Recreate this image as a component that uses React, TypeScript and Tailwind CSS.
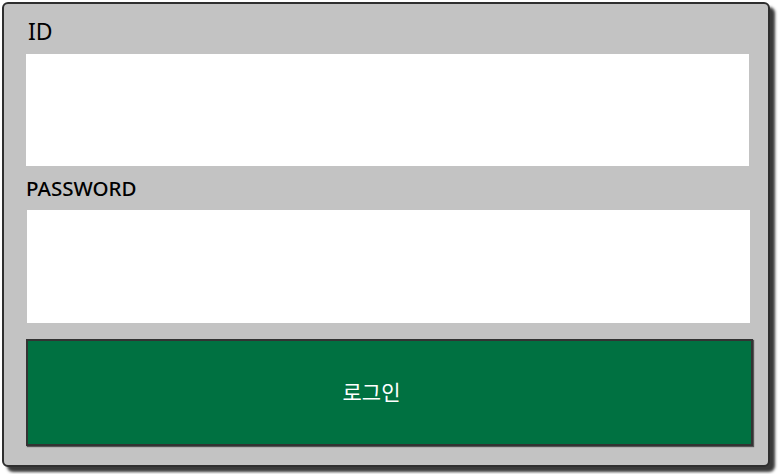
const App = () => {
  return (
    <div className="w-[779px] h-[474px] bg-white" style={{ fontFamily: '"Noto Sans", "Noto Sans CJK KR", sans-serif' }}>
      <div className="ml-[2px] mt-[2px] w-[768px] h-[465px] border-2 border-[#2e2e2e] rounded-[6px] bg-[#c3c3c3] shadow-[5px_5px_3px_#3a3a3a] pl-[22px]">
        {/* ID */}
        <div className="h-[50px] leading-[54px] pl-[2px] text-[23px] text-black">ID</div>
        <input className="block w-[723px] h-[112px] bg-white outline-none" />

        {/* PASSWORD */}
        <div className="h-[44px] leading-[44px] text-[20.5px] font-medium text-black">PASSWORD</div>
        <input type="password" className="block ml-[1px] w-[723px] h-[113px] bg-white outline-none" />

        <button className="mt-[16px] w-[727px] h-[107px] bg-[#007141] border-2 border-[#333] shadow-[1px_1px_1px_#555] text-white text-[21px] pr-[36px] flex items-center justify-center">
          로그인
        </button>
      </div>
    </div>
  );
};

export default App;
